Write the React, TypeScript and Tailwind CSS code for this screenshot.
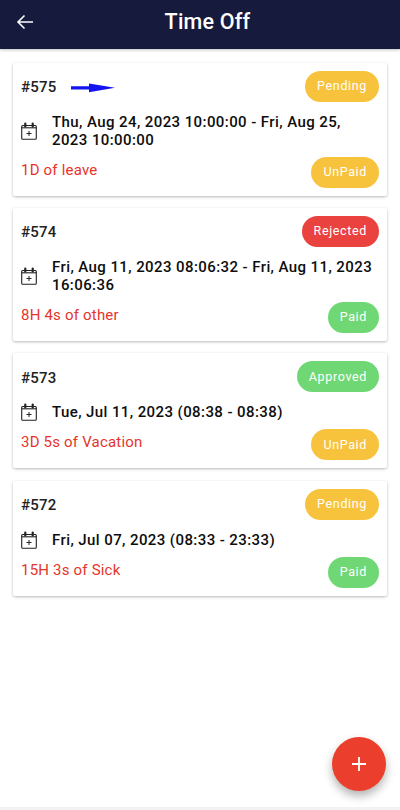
import React from "react";

const font = { fontFamily: "Roboto, sans-serif" };

function CalendarIcon() {
  return (
    <svg width="16" height="18" viewBox="0 0 16 18" fill="none" stroke="#222" className="shrink-0">
      <rect x="0.7" y="3.5" width="14.6" height="13.8" rx="1" strokeWidth="1.1" />
      <path d="M0.700 5.800h14.600" strokeWidth="1.1" />
      <path d="M4.300 1.500v3M11.700 1.500v3" strokeWidth="2.200" strokeLinecap="round" />
      <path d="M8 9v5M5.500 11.500h5" strokeWidth="1" />
    </svg>
  );
}

function Pill({ label, color }: { label: string; color: string }) {
  return (
    <div className={`h-[31px] px-3 rounded-full flex items-center text-white text-[12.5px] tracking-[0.65px] ${color}`}>
      {label}
    </div>
  );
}

const Y = "bg-[#f8c33c]";
const R = "bg-[#e9423f]";
const G = "bg-[#6fd874]";

const items = [
  { id: "#575", status: "Pending", sc: Y, date: "Thu, Aug 24, 2023 10:00:00 - Fri, Aug 25, 2023 10:00:00", leave: "1D of leave", pay: "UnPaid", pc: Y, arrow: true },
  { id: "#574", status: "Rejected", sc: R, date: "Fri, Aug 11, 2023 08:06:32 - Fri, Aug 11, 2023 16:06:36", leave: "8H 4s of other", pay: "Paid", pc: G },
  { id: "#573", status: "Approved", sc: G, date: "Tue, Jul 11, 2023 (08:38 - 08:38)", leave: "3D 5s of Vacation", pay: "UnPaid", pc: Y },
  { id: "#572", status: "Pending", sc: Y, date: "Fri, Jul 07, 2023 (08:33 - 23:33)", leave: "15H 3s of Sick", pay: "Paid", pc: G },
];

export default function App() {
  return (
    <div style={font} className="relative w-[400px] h-[810px] overflow-hidden bg-white">
      <header className="h-[49px] bg-[#161a3d] flex items-center relative shadow-[0_1px_3px_rgba(0,0,0,0.25)]">
        <svg width="18" height="16" viewBox="0 0 18 16" fill="none" stroke="#fff" strokeWidth="1.6" className="ml-4 mb-[6px]">
          <path d="M17 8H2M8.500 1.500 2 8l6.500 6.500" />
        </svg>
        <h1 className="absolute left-0 right-0 pl-[15px] text-center text-white text-[21.5px] font-medium tracking-[0.2px] mb-[5px]">Time Off</h1>
      </header>
      <main className="px-[13px] pt-[14px] flex flex-col gap-[12.2px]">
        {items.map((it) => (
          <section key={it.id} className="bg-white rounded-[2px] p-2 shadow-[0_1px_3px_rgba(0,0,0,0.28)]">
            <div className="flex items-center justify-between">
              <div className="flex items-center pt-[2px]">
                <span className="text-[15px] font-medium text-[#222] tracking-[0.2px]">{it.id}</span>
                {it.arrow && (
                  <svg width="44" height="10" viewBox="0 0 44 10" className="ml-[15px]">
                    <path d="M0 3.200h18V0.500l26 4.300L18 9.300V6.600H0z" fill="#1414f0" />
                  </svg>
                )}
              </div>
              <Pill label={it.status} color={it.sc} />
            </div>
            <div className="flex items-center pt-[1px] mt-[10px] mb-[8px]">
              <CalendarIcon />
              <p className="ml-[15px] text-[15px] leading-[18px] font-medium text-[#0d0d0d] tracking-[0.41px]">{it.date}</p>
            </div>
            <div className="flex items-start justify-between">
              <span className="text-[15px] leading-[26px] text-[#e5352b] tracking-[0.2px]">{it.leave}</span>
              <Pill label={it.pay} color={it.pc} />
            </div>
          </section>
        ))}
      </main>
      <button className="absolute left-[332px] top-[737px] w-[54px] h-[54px] rounded-full bg-[#ec3e2c] flex items-center justify-center shadow-[0_5px_10px_rgba(0,0,0,0.3)]">
        <svg width="14" height="14" viewBox="0 0 14 14" stroke="#fff" strokeWidth="1.8"><path d="M7 0v14M0 7h14" /></svg>
      </button>
      <div className="absolute left-0 right-0 bottom-0 h-[3px] bg-[#f2f2f2]" />
    </div>
  );
}
